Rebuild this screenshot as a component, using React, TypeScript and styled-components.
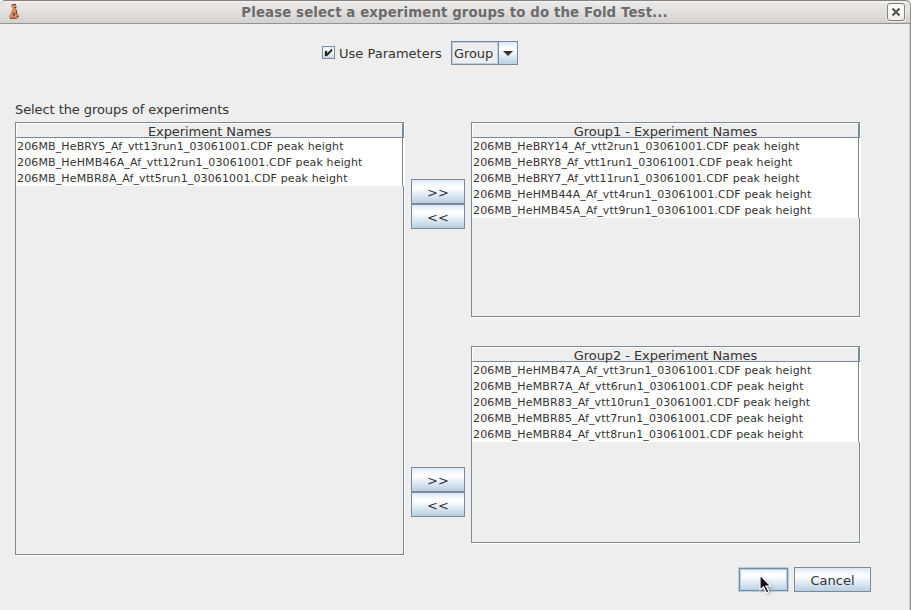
import React from "react";
import styled, { createGlobalStyle, css } from "styled-components";

const LINE = "#7a8a99";

const GlobalStyle = createGlobalStyle`
  * { box-sizing: border-box; }
  html, body { margin: 0; padding: 0; overflow: hidden; background: #fff; }
  body { font-family: "DejaVu Sans", sans-serif; color: #333; }
`;

const Window = styled.div`
  position: relative;
  width: 911px;
  height: 610px;
  overflow: hidden;
  background: #eee;
  border-right: 1px solid #8f8d89;
  border-top-left-radius: 5px;
  border-top-right-radius: 5px;
  box-shadow: inset -1px 0 0 #d3d0cb;
`;

const TitleBar = styled.header`
  display: grid;
  grid-template-columns: 30px 1fr 30px;
  height: 24px;
  border-top: 1px solid #838181;
  border-bottom: 1px solid #969492;
  border-radius: 5px 5px 0 0;
  background: linear-gradient(#f8f7f7 0, #e9e8e7 2px, #e2e1e0 10px, #d2d1cf 100%);
`;

const Title = styled.h1`
  margin: 0;
  padding: 1px 1px 0 0;
  font-size: 13.33px;
  line-height: 22px;
  letter-spacing: 0.11px;
  font-weight: bold;
  text-align: center;
  white-space: nowrap;
  color: #6b6b6b;
`;

const AppIcon = styled.svg`
  width: 12px;
  height: 16px;
  margin: 3px 0 0 9px;
`;

const CloseButton = styled.button`
  display: flex;
  align-items: center;
  justify-content: center;
  width: 18px;
  height: 18px;
  margin: 2px 0 0 7px;
  padding: 0;
  border: 1px solid #85827f;
  border-radius: 3px;
  background: linear-gradient(#fff, #efefed);
  box-shadow: 0 0 0 1px #e9e8e6;
`;

const Parameters = styled.div`
  display: flex;
  align-items: flex-start;
  height: 24px;
  margin: 17px 0 0 322px;
`;

const Checkbox = styled.span`
  display: flex;
  width: 13px;
  height: 13px;
  margin: 5px 4px 0 0;
  border: 1px solid ${LINE};
  background: linear-gradient(#e0eaf4, #fff 30%, #c4d6e8);
`;

const ParameterLabel = styled.label`
  width: 112px;
  padding-top: 5px;
  font-size: 13px;
  line-height: 16px;
  white-space: nowrap;
`;

const Combo = styled.div`
  display: flex;
  width: 67px;
  height: 24px;
  border: 1px solid ${LINE};
`;

const ComboValue = styled.span`
  width: 46px;
  border: 1px solid #b8cfe5;
  padding-left: 1px;
  font-size: 13px;
  line-height: 21px;
  letter-spacing: -0.1px;
`;

const face = css`
  background: linear-gradient(#dde8f3 0, #fff 30%, #fff 35%, #b8cfe5 100%);
`;

const ComboArrow = styled.span`
  display: flex;
  justify-content: center;
  width: 19px;
  padding-top: 9px;
  border-left: 1px solid ${LINE};
  ${face}
`;

const Prompt = styled.p`
  margin: 37px 0 4px 15px;
  font-size: 13px;
  line-height: 16px;
  letter-spacing: -0.08px;
`;

const Workspace = styled.main`
  display: grid;
  grid-template-columns: 389px 54px 389px;
  column-gap: 7px;
  height: 433px;
  margin-left: 15px;
`;

const GroupColumn = styled.div`
  display: flex;
  flex-direction: column;
  gap: 29px;
  margin-left: -1px;
  width: 389px;
`;

const Panel = styled.section<{ $height: number }>`
  height: ${(p) => p.$height}px;
  border: 1px solid ${LINE};
  box-shadow: 1px 1px 0 #fff;
`;

const PanelHeader = styled.div`
  height: 15px;
  border-top: 1px solid #fff;
  border-left: 1px solid #fff;
  border-right: 1px solid ${LINE};
  border-bottom: 1px solid ${LINE};
  font-size: 13px;
  line-height: 15px;
  letter-spacing: -0.07px;
  text-align: center;
  white-space: nowrap;
`;

const Rows = styled.ul`
  margin: 0;
  padding: 0 0 0 1px;
  list-style: none;
  background: #fff;
  border-right: 1px solid ${LINE};
  box-shadow: 1px 0 0 #fff;
`;

const Row = styled.li`
  height: 16px;
  font-size: 11px;
  line-height: 18px;
  letter-spacing: 0.137px;
  white-space: nowrap;
`;

const Transfers = styled.div`
  display: flex;
  flex-direction: column;
  padding-top: 57px;
  gap: 238px;
`;

const TransferPair = styled.div`
  display: flex;
  flex-direction: column;
`;

const Button = styled.button<{ $width: number; $focused?: boolean }>`
  width: ${(p) => p.$width}px;
  height: 25px;
  padding: 2px 0 0;
  border: 1px solid ${LINE};
  ${face}
  color: #333;
  font-family: inherit;
  font-size: 13px;
  line-height: 21px;
  text-align: center;
  ${(p) =>
    p.$focused &&
    css`
      border-color: #b8cfe5;
      box-shadow: inset 0 0 0 1px ${LINE}, inset 0 0 0 2px #b8cfe5;
    `}
`;

const Actions = styled.footer`
  display: flex;
  gap: 5px;
  margin: 12px 0 0 738px;
`;

const Pointer = styled.svg`
  position: absolute;
  left: 757px;
  top: 572px;
  width: 16px;
  height: 23px;
  filter: drop-shadow(1px 1px 1px rgba(0, 0, 0, 0.3));
`;

const available = [
  "206MB_HeBRY5_Af_vtt13run1_03061001.CDF peak height",
  "206MB_HeHMB46A_Af_vtt12run1_03061001.CDF peak height",
  "206MB_HeMBR8A_Af_vtt5run1_03061001.CDF peak height",
];
const group1 = [
  "206MB_HeBRY14_Af_vtt2run1_03061001.CDF peak height",
  "206MB_HeBRY8_Af_vtt1run1_03061001.CDF peak height",
  "206MB_HeBRY7_Af_vtt11run1_03061001.CDF peak height",
  "206MB_HeHMB44A_Af_vtt4run1_03061001.CDF peak height",
  "206MB_HeHMB45A_Af_vtt9run1_03061001.CDF peak height",
];
const group2 = [
  "206MB_HeHMB47A_Af_vtt3run1_03061001.CDF peak height",
  "206MB_HeMBR7A_Af_vtt6run1_03061001.CDF peak height",
  "206MB_HeMBR83_Af_vtt10run1_03061001.CDF peak height",
  "206MB_HeMBR85_Af_vtt7run1_03061001.CDF peak height",
  "206MB_HeMBR84_Af_vtt8run1_03061001.CDF peak height",
];

function Table({ title, rows, height }: { title: string; rows: string[]; height: number }) {
  return (
    <Panel $height={height}>
      <PanelHeader>{title}</PanelHeader>
      <Rows>
        {rows.map((r) => (
          <Row key={r}>{r}</Row>
        ))}
      </Rows>
    </Panel>
  );
}

function TransferButtons() {
  return (
    <TransferPair>
      <Button $width={54}>&gt;&gt;</Button>
      <Button $width={54}>&lt;&lt;</Button>
    </TransferPair>
  );
}

export default function App() {
  return (
    <>
      <GlobalStyle />
      <Window>
        <TitleBar>
          <AppIcon viewBox="0 0 12 16">
            <path d="M2 1h5l1 2-1 2 1 2 1 4h1v2H9v2H1l-1-3 2-3 1-3 1-2-2-1z" fill="#cb8259" />
            <path d="M3 0h4v1H3zM5 3h2v1H5zM7 6h1v4H7zM4 9h2v1H4zM5 10h1v2H4v-1h1zM8 12h2v1H8zM1 14h6v1H1z" fill="#7e4931" />
            <path d="M3 2h2v1H3zM5 6h1v2H5zM2 11h1v2H2zM6 11h1v2H6z" fill="#e8a67f" />
          </AppIcon>
          <Title>Please select a experiment groups to do the Fold Test...</Title>
          <CloseButton aria-label="Close">
            <svg width="10" height="10" viewBox="0 0 10 10">
              <path d="M1.5 1.5l7 7M8.5 1.5l-7 7" stroke="#555" strokeWidth="2.2" />
            </svg>
          </CloseButton>
        </TitleBar>
        <Parameters>
          <Checkbox>
            <svg width="11" height="11" viewBox="0 0 11 11">
              <path d="M2 4h2v2.5L8.5 2H9v2L4 9H2z" fill="#222" stroke="#222" strokeWidth="0.3" />
            </svg>
          </Checkbox>
          <ParameterLabel>Use Parameters</ParameterLabel>
          <Combo>
            <ComboValue>Group</ComboValue>
            <ComboArrow>
              <svg width="10" height="5" viewBox="0 0 10 5">
                <path d="M0 0h10L5 5z" fill="#333" />
              </svg>
            </ComboArrow>
          </Combo>
        </Parameters>
        <Prompt>Select the groups of experiments</Prompt>
        <Workspace>
          <Table title="Experiment Names" rows={available} height={433} />
          <Transfers>
            <TransferButtons />
            <TransferButtons />
          </Transfers>
          <GroupColumn>
            <Table title="Group1 - Experiment Names" rows={group1} height={195} />
            <Table title="Group2 - Experiment Names" rows={group2} height={197} />
          </GroupColumn>
        </Workspace>
        <Actions>
          <Button $width={51} $focused aria-label="OK" />
          <Button $width={77}>Cancel</Button>
        </Actions>
        <Pointer viewBox="0 0 16 23">
          <path d="M3 3v15l3.5-3 3 6 2.5-1.2-3-5.6h4.8z" fill="#11111f" stroke="#fff" strokeWidth="1.2" />
        </Pointer>
      </Window>
    </>
  );
}
